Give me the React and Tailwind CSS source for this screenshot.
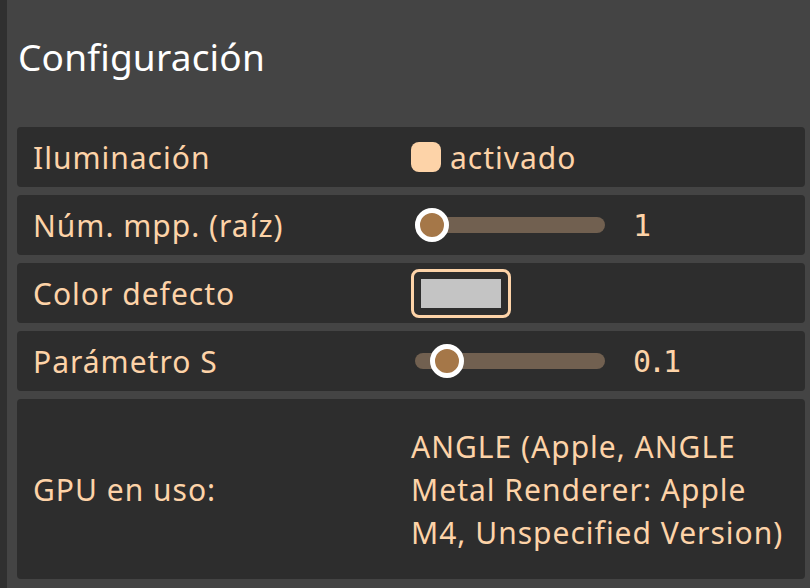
export default function App() {
  const peach = "text-[#fdd3a8]";
  const mono = { fontFamily: '"DejaVu Sans Mono", monospace' };
  return (
    <div
      className="w-[810px] h-[588px] bg-[#444444] flex overflow-hidden"
      style={{ fontFamily: '"Noto Sans", "Open Sans", sans-serif' }}
    >
      <div className="w-[7px] shrink-0 bg-[#303030]" />
      <div className="flex-1 pl-[10px] pr-[5px]">
        <div className="h-[127px] flex items-center pb-[14px]">
          <h1 className="text-white text-[37px] leading-none pl-[1px] tracking-[0.2px]">Configuración</h1>
        </div>
        <div className={`flex flex-col gap-2 text-[30px] tracking-[1px] ${peach}`}>
          <div className="h-[60px] rounded-[4px] bg-[#2d2d2d] grid grid-cols-2 items-center px-4">
            <span>Iluminación</span>
            <div className="flex items-center gap-[9px]">
              <div className="w-[30px] h-[30px] rounded-[8px] bg-[#fdd3a8]" />
              <span>activado</span>
            </div>
          </div>
          <div className="h-[60px] rounded-[4px] bg-[#2d2d2d] grid grid-cols-2 items-center px-4">
            <span>Núm. mpp. (raíz)</span>
            <div className="flex items-center">
              <div className="relative ml-[4px] w-[190px] h-[16px] rounded-full bg-[#716050]">
                <div className="absolute left-0 top-1/2 -translate-y-1/2 w-[34px] h-[34px] rounded-full border-[5px] border-white bg-[#a57748]" />
              </div>
              <span className="ml-[28px] text-[30px] tracking-[-3px]" style={mono}>1</span>
            </div>
          </div>
          <div className="h-[60px] rounded-[4px] bg-[#2d2d2d] grid grid-cols-2 items-center px-4">
            <span>Color defecto</span>
            <div className="flex items-center">
              <div className="w-[100px] h-[49px] rounded-[8px] border-[3px] border-[#fdd3a8] p-[7px]">
                <div className="w-full h-full bg-[#c4c4c4]" />
              </div>
            </div>
          </div>
          <div className="h-[60px] rounded-[4px] bg-[#2d2d2d] grid grid-cols-2 items-center px-4">
            <span>Parámetro S</span>
            <div className="flex items-center">
              <div className="relative ml-[4px] w-[190px] h-[16px] rounded-full bg-[#716050]">
                <div className="absolute left-[15px] top-1/2 -translate-y-1/2 w-[34px] h-[34px] rounded-full border-[5px] border-white bg-[#a57748]" />
              </div>
              <span className="ml-[28px] text-[30px] tracking-[-3px]" style={mono}>0.1</span>
            </div>
          </div>
          <div className="h-[180px] rounded-[4px] bg-[#2d2d2d] grid grid-cols-2 items-center px-4">
            <span>GPU en uso:</span>
            <div className="leading-[43px] whitespace-nowrap">
              ANGLE (Apple, ANGLE
              <br />
              Metal Renderer: Apple
              <br />
              M4, Unspecified Version)
            </div>
          </div>
        </div>
      </div>
    </div>
  );
}
